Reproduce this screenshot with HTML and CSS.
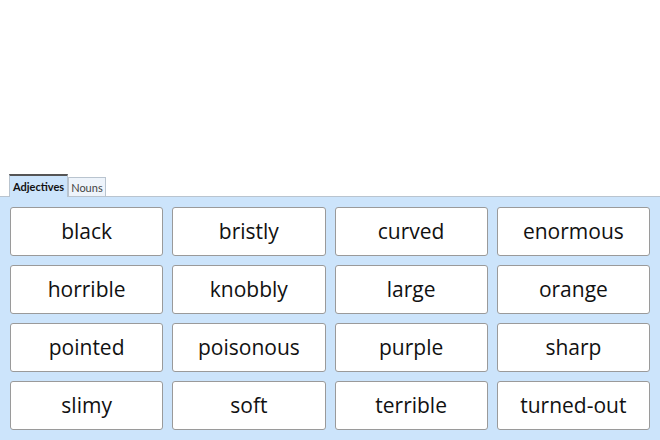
FILE: index.html
```html
<!DOCTYPE html>
<html>
<head>
<meta charset="utf-8">
<link rel="stylesheet" href="styles.css">
</head>
<body>
<div class="page">
  <div class="spacer"></div>
  <div class="tabs">
    <div class="tab active">Adjectives</div>
    <div class="tab">Nouns</div>
  </div>
  <div class="panel">
    <div class="card">black</div>
    <div class="card">bristly</div>
    <div class="card">curved</div>
    <div class="card">enormous</div>
    <div class="card">horrible</div>
    <div class="card">knobbly</div>
    <div class="card">large</div>
    <div class="card">orange</div>
    <div class="card">pointed</div>
    <div class="card">poisonous</div>
    <div class="card">purple</div>
    <div class="card">sharp</div>
    <div class="card">slimy</div>
    <div class="card">soft</div>
    <div class="card">terrible</div>
    <div class="card">turned-out</div>
  </div>
</div>
</body>
</html>
```

FILE: styles.css
```css
html, body {
  margin: 0;
  padding: 0;
  background: #ffffff;
  overflow: hidden;
}
.page {
  width: 660px;
  height: 440px;
  display: flex;
  flex-direction: column;
}
.spacer {
  height: 174px;
  flex: none;
}
.tabs {
  display: flex;
  align-items: flex-end;
  padding-left: 9px;
  height: 22px;
  flex: none;
  position: relative;
  z-index: 1;
}
.tab {
  font-family: Lato, sans-serif;
  font-size: 11px;
  color: #444;
  border: 1px solid #b9c4cf;
  border-bottom: none;
  background: #eef4fb;
  padding: 0 2px;
  height: 19px;
  line-height: 20px;
  box-sizing: border-box;
}
.tab.active {
  font-weight: bold;
  color: #111;
  background: #cce4fb;
  border-color: #b9c4cf;
  border-top: 2px solid #555;
  padding: 0 3px;
  height: 23px;
  line-height: 21px;
  margin-bottom: -1px;
}
.panel {
  flex: 1;
  background: #cce4fb;
  border-top: 1px solid #b9c4cf;
  padding: 10px 10px 0 10px;
  display: grid;
  grid-template-columns: repeat(4, 1fr);
  grid-auto-rows: 49px;
  gap: 9px;
  align-content: start;
}
.card {
  background: #ffffff;
  border: 1px solid #9a9a9a;
  border-radius: 3px;
  display: flex;
  align-items: center;
  justify-content: center;
  font-family: "Open Sans", sans-serif;
  font-size: 21px;
  color: #111;
  padding-bottom: 1px;
  box-sizing: border-box;
}
```
